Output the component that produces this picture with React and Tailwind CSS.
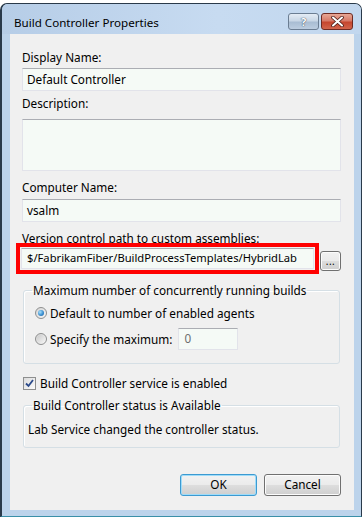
const FONT = "font-['Noto_Sans',sans-serif]";

function TextBox({ children, className = "" }) {
  return (
    <div
      className={`h-[23px] bg-[#f5faf6] border border-[#e2e3ea] border-t-[#abadb3] flex items-center pl-[4px] text-black whitespace-nowrap overflow-hidden ${className}`}
    >
      {children}
    </div>
  );
}

function Label({ children, className = "" }) {
  return <div className={`h-[16px] leading-[16px] text-black whitespace-nowrap ${className}`}>{children}</div>;
}

function Radio({ checked }) {
  return (
    <div className="w-[12px] h-[12px] rounded-full border border-[#8e8f8f] bg-[linear-gradient(135deg,#d6d6d6,#f6f6f6)] flex items-center justify-center shrink-0">
      {checked ? (
        <div className="w-[6px] h-[6px] rounded-full bg-[radial-gradient(circle_at_35%_35%,#a9e1fb_0%,#3b8fd1_55%,#1c5f9a_100%)]" />
      ) : (
        <div className="w-[8px] h-[8px] rounded-full bg-[linear-gradient(135deg,#cbcbcb,#f4f4f4)]" />
      )}
    </div>
  );
}

function Button({ children, focused }) {
  return (
    <div
      className={`w-[77px] h-[22px] rounded-[3px] border ${
        focused ? "border-[#3c9ad1] shadow-[inset_0_0_0_1px_#9fdcf9]" : "border-[#707070] shadow-[inset_0_0_0_1px_#fcfcfc]"
      } bg-[linear-gradient(to_bottom,#f2f2f2_0%,#ebebeb_48%,#dddddd_52%,#cfcfcf_100%)] flex items-center justify-center text-black leading-none`}
    >
      {children}
    </div>
  );
}

export default function App() {
  return (
    <div className={`w-[364px] h-[518px] bg-white overflow-hidden pt-[3px] text-[11.75px] ${FONT}`}>
      <div className="w-[362px] h-[514px] border border-[#2a3a4a] border-l-2 border-b-[#3a8fa8] rounded-t-[7px] bg-[#bcd3eb] flex flex-col">
        {/* Title bar */}
        <div className="h-[30px] flex items-start bg-[linear-gradient(to_right,#b6cde7,#c7dbf1_60%,#c2d7ee)] rounded-t-[6px]">
          <div className="ml-[12px] mt-[11px] h-[16px] leading-[16px] text-[11.6px] text-black whitespace-nowrap">
            Build Controller Properties
          </div>
          <div className="ml-auto mr-[8px] mt-[9px] flex gap-[2px]">
            <div className="w-[31px] h-[17px] rounded-[3px] border border-[#6b7d92] bg-[linear-gradient(to_bottom,#e4ecf5_0%,#c9d7e6_45%,#a9bdd3_55%,#bccde0_100%)] flex items-center justify-center">
              <span className="text-[11px] font-bold leading-none text-white [text-shadow:0_0_1px_#3b4a5c,0_0_1px_#3b4a5c]">?</span>
            </div>
            <div className="w-[32px] h-[17px] rounded-[3px] border border-[#6e2a22] bg-[linear-gradient(to_bottom,#e8a795_0%,#d77a68_45%,#c5462f_55%,#d2654c_100%)] flex items-center justify-center">
              <svg width="13" height="11" viewBox="0 0 13 11">
                <path d="M2 1.5 L11 9.5 M11 1.5 L2 9.5" stroke="#4a1c15" strokeWidth="3.6" strokeLinecap="round" />
                <path d="M2 1.5 L11 9.5 M11 1.5 L2 9.5" stroke="#ffffff" strokeWidth="2" strokeLinecap="round" />
              </svg>
            </div>
          </div>
        </div>

        {/* Client */}
        <div className="ml-[8px] w-[344px] h-[476px] bg-[#f0f0f0] pl-[12px] pr-[13px] pt-[15px] flex flex-col">
          <Label>Display Name:</Label>
          <TextBox className="mt-[3px]">Default Controller</TextBox>
          <Label className="mt-[4px]">Description:</Label>
          <TextBox className="mt-[8px] !h-[52px]"></TextBox>
          <Label className="mt-[8px]">Computer Name:</Label>
          <TextBox className="mt-[4px]">vsalm</TextBox>
          <Label className="mt-[8px]">Version control path to custom assemblies:</Label>

          <div className="flex items-start mt-[-3px] ml-[-6px]">
            <div className="w-[303px] h-[31px] border-[4px] border-[#ff0000] p-[1px]">
              <TextBox className="!h-[21px] !pl-[5px] text-[11.2px]">$/FabrikamFiber/BuildProcessTemplates/HybridLab</TextBox>
            </div>
            <div className="ml-[1px] mt-[8px] w-[21px] h-[20px] rounded-[3px] border border-[#707070] shadow-[inset_0_0_0_1px_#fcfcfc] bg-[linear-gradient(to_bottom,#f2f2f2_0%,#ebebeb_48%,#dddddd_52%,#cfcfcf_100%)] flex items-end justify-center pb-[4px]">
              <span className="text-[10px] leading-none text-black tracking-[0.5px]">...</span>
            </div>
          </div>

          <fieldset className="mt-[8px] ml-[1px] w-[317px] h-[82px] border border-[#d5dfe5] rounded-[3px] px-[8px] shadow-[inset_1px_1px_0_#ffffff]">
            <legend className="px-[1px] h-[16px] leading-[16px] text-black whitespace-nowrap">
              Maximum number of concurrently running builds
            </legend>
            <div className="mt-[7px] h-[16px] flex items-center ml-[3px] gap-[3px]">
              <Radio checked />
              <span className="leading-[16px] whitespace-nowrap">Default to number of enabled agents</span>
            </div>
            <div className="mt-[7px] h-[22px] flex items-center ml-[3px] gap-[3px]">
              <Radio />
              <span className="leading-[16px] whitespace-nowrap">Specify the maximum:</span>
              <div className="ml-[3px] w-[60px] h-[22px] bg-[#f5faf6] border border-[#e2e3ea] border-t-[#abadb3] flex items-center pl-[5px] text-[#6d6d6d]">
                0
              </div>
            </div>
          </fieldset>

          <div className="mt-[11px] h-[16px] flex items-center ml-[1px] gap-[4px]">
            <div className="w-[13px] h-[13px] border border-[#8e8f8f] bg-[linear-gradient(135deg,#dcdcdc,#fbfbfb)] flex items-center justify-center">
              <svg width="11" height="11" viewBox="0 0 11 11">
                <path d="M2 5.5 L4.5 8 L9 2" stroke="#2b4a8a" strokeWidth="1.8" fill="none" />
              </svg>
            </div>
            <span className="leading-[16px] whitespace-nowrap">Build Controller service is enabled</span>
          </div>

          <fieldset className="mt-[6px] ml-[1px] w-[317px] h-[51px] border border-[#d5dfe5] rounded-[3px] pl-[4px] shadow-[inset_1px_1px_0_#ffffff]">
            <legend className="ml-[4px] px-[1px] h-[16px] leading-[16px] text-black whitespace-nowrap">
              Build Controller status is Available
            </legend>
            <div className="mt-[8px] h-[16px] leading-[16px] whitespace-nowrap">
              Lab Service changed the controller status.
            </div>
          </fieldset>

          <div className="mt-[26px] flex justify-end gap-[7px]">
            <Button focused>OK</Button>
            <Button>Cancel</Button>
          </div>
        </div>
      </div>
    </div>
  );
}
